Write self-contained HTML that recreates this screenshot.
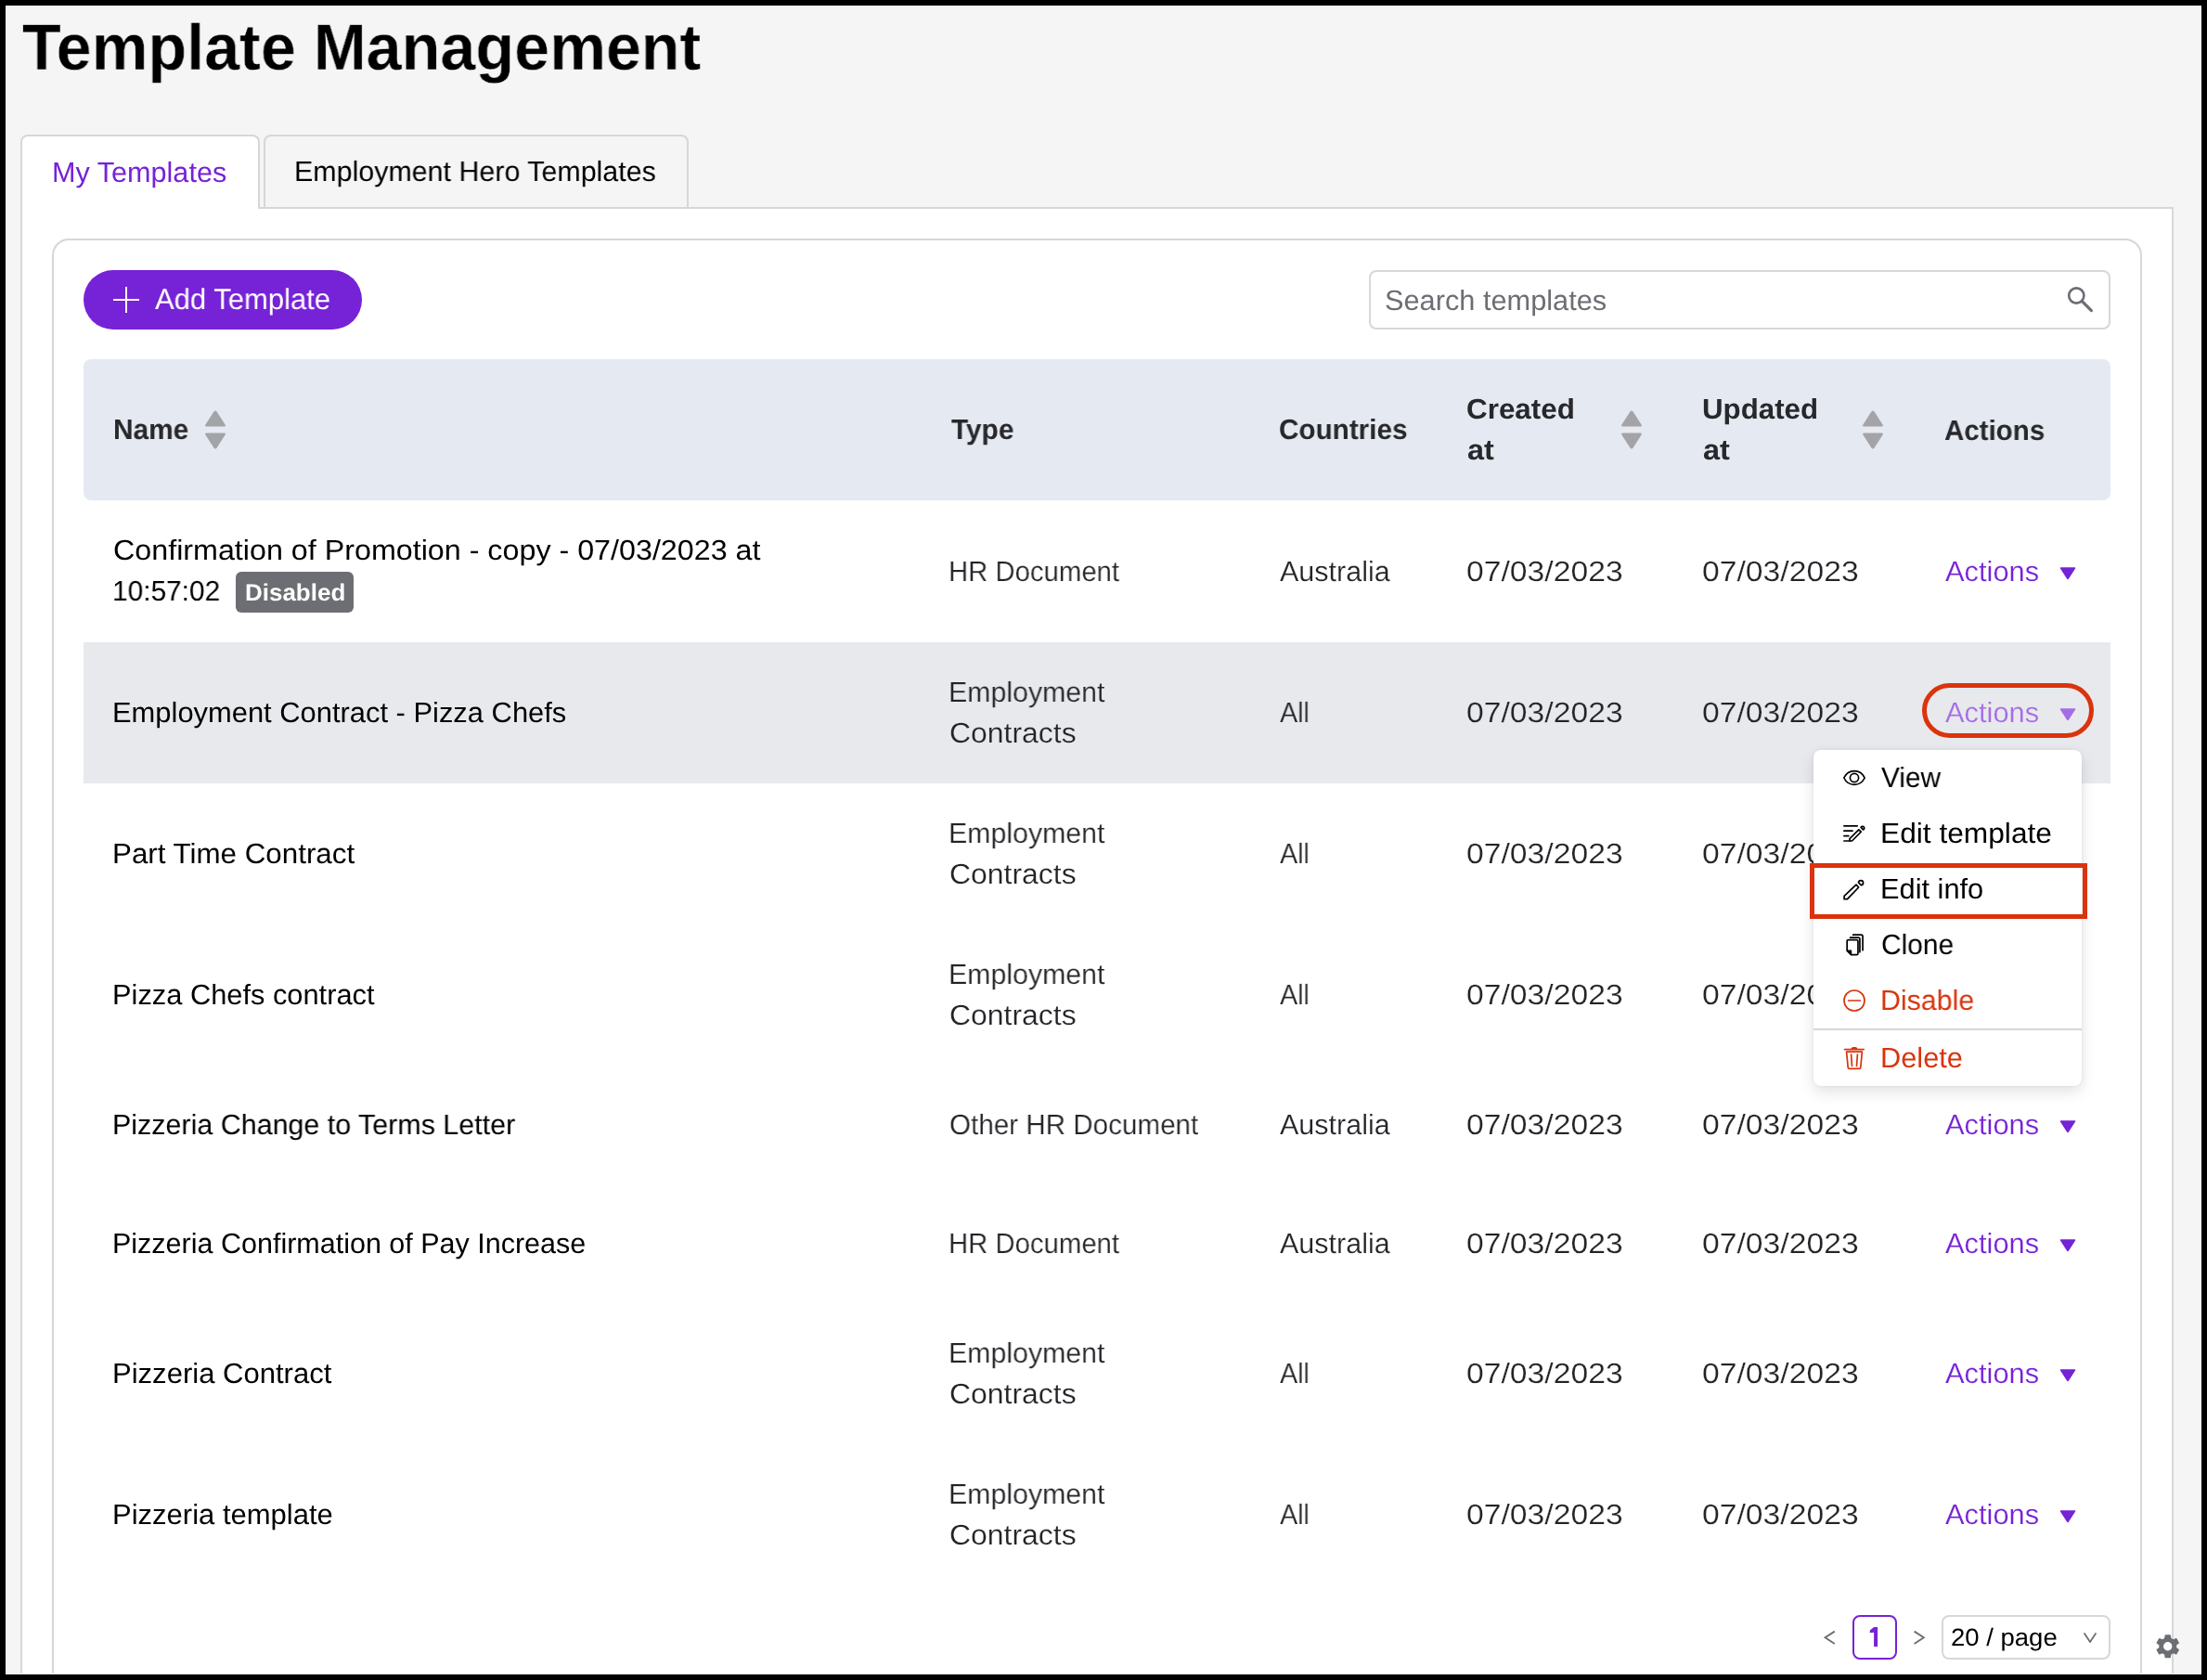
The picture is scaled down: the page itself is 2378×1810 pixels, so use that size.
<!DOCTYPE html>
<html><head><meta charset="utf-8"><title>Template Management</title>
<style>
html,body{margin:0;padding:0;}
body{width:2378px;height:1810px;overflow:hidden;background:#000;font-family:"Liberation Sans",sans-serif;}
#root{position:relative;width:2378px;height:1810px;overflow:hidden;background:#000;}
.b{position:absolute;display:block;}
.t{position:absolute;white-space:pre;transform-origin:0 0;will-change:transform;text-rendering:geometricPrecision;font-family:"Liberation Sans",sans-serif;}
</style></head><body><div id="root">
<div class="b" style="left:6px;top:6px;width:2366px;height:1798px;background:#f5f5f5"></div>
<div class="b" style="left:22px;top:223px;width:2320px;height:1677px;background:#fff;border:2px solid #d6d7db;box-sizing:border-box"></div>
<div class="b" style="left:22px;top:145px;width:258px;height:80px;background:#fff;border:2px solid #d6d7db;border-bottom:none;border-radius:8px 8px 0 0;box-sizing:border-box"></div>
<div class="b" style="left:284px;top:145px;width:458px;height:80px;background:#f5f5f5;border:2px solid #d6d7db;border-bottom:none;border-radius:8px 8px 0 0;box-sizing:border-box"></div>
<div class="b" style="left:284px;top:223px;width:458px;height:2px;background:#d6d7db"></div>
<div class="b" style="left:56px;top:257px;width:2252px;height:1643px;background:#fff;border:2px solid #d6d7db;border-radius:18px;box-sizing:border-box"></div>
<div class="b" style="left:90px;top:291px;width:300px;height:64px;background:#7622d7;border-radius:32px"></div>
<div class="b" style="left:122px;top:322px;width:28px;height:2px;background:#fff"></div>
<div class="b" style="left:135px;top:309px;width:2px;height:28px;background:#fff"></div>
<div class="b" style="left:1475px;top:291px;width:799px;height:64px;background:#fff;border:2px solid #d6d7db;border-radius:8px;box-sizing:border-box"></div>
<svg class="b" style="left:2224px;top:305px" width="36" height="36" viewBox="0 0 36 36"><circle cx="13.3" cy="13.5" r="8.1" fill="none" stroke="#6d6e73" stroke-width="2.6"/><line x1="19.2" y1="19.4" x2="29.4" y2="29.6" stroke="#6d6e73" stroke-width="3.2" stroke-linecap="round"/></svg>
<div class="b" style="left:90px;top:387px;width:2184px;height:152px;background:#e5e9f1;border-radius:8px"></div>
<svg class="b" style="left:219px;top:440px" width="26" height="46" viewBox="0 0 26 46"><path d="M13 2.5 Q13.9 2.5 14.6 3.6 L23.6 17.6 Q24.6 19.5 22.6 19.5 L3.4 19.5 Q1.4 19.5 2.4 17.6 L11.4 3.6 Q12.1 2.5 13 2.5Z" fill="#a3a4a8"/><path d="M13 43.5 Q13.9 43.5 14.6 42.4 L23.6 28.4 Q24.6 26.5 22.6 26.5 L3.4 26.5 Q1.4 26.5 2.4 28.4 L11.4 42.4 Q12.1 43.5 13 43.5Z" fill="#a3a4a8"/></svg>
<svg class="b" style="left:1744.5px;top:440px" width="26" height="46" viewBox="0 0 26 46"><path d="M13 2.5 Q13.9 2.5 14.6 3.6 L23.6 17.6 Q24.6 19.5 22.6 19.5 L3.4 19.5 Q1.4 19.5 2.4 17.6 L11.4 3.6 Q12.1 2.5 13 2.5Z" fill="#a3a4a8"/><path d="M13 43.5 Q13.9 43.5 14.6 42.4 L23.6 28.4 Q24.6 26.5 22.6 26.5 L3.4 26.5 Q1.4 26.5 2.4 28.4 L11.4 42.4 Q12.1 43.5 13 43.5Z" fill="#a3a4a8"/></svg>
<svg class="b" style="left:2005px;top:440px" width="26" height="46" viewBox="0 0 26 46"><path d="M13 2.5 Q13.9 2.5 14.6 3.6 L23.6 17.6 Q24.6 19.5 22.6 19.5 L3.4 19.5 Q1.4 19.5 2.4 17.6 L11.4 3.6 Q12.1 2.5 13 2.5Z" fill="#a3a4a8"/><path d="M13 43.5 Q13.9 43.5 14.6 42.4 L23.6 28.4 Q24.6 26.5 22.6 26.5 L3.4 26.5 Q1.4 26.5 2.4 28.4 L11.4 42.4 Q12.1 43.5 13 43.5Z" fill="#a3a4a8"/></svg>
<div class="b" style="left:90px;top:692px;width:2184px;height:152px;background:#e8e9ec"></div>
<div class="b" style="left:254px;top:616px;width:127px;height:44px;background:#6d6e73;border-radius:6px"></div>
<svg class="b" style="left:2218px;top:609.5px" width="20" height="16" viewBox="0 0 20 16"><path d="M2.6 1.2 L17.4 1.2 Q18.8 1.2 18.1 2.5 L11 13.6 Q10 14.9 9 13.6 L1.9 2.5 Q1.2 1.2 2.6 1.2Z" fill="#7622d7"/></svg>
<svg class="b" style="left:2218px;top:762.0px" width="20" height="16" viewBox="0 0 20 16"><path d="M2.6 1.2 L17.4 1.2 Q18.8 1.2 18.1 2.5 L11 13.6 Q10 14.9 9 13.6 L1.9 2.5 Q1.2 1.2 2.6 1.2Z" fill="#a56ce8"/></svg>
<svg class="b" style="left:2218px;top:914.0px" width="20" height="16" viewBox="0 0 20 16"><path d="M2.6 1.2 L17.4 1.2 Q18.8 1.2 18.1 2.5 L11 13.6 Q10 14.9 9 13.6 L1.9 2.5 Q1.2 1.2 2.6 1.2Z" fill="#7622d7"/></svg>
<svg class="b" style="left:2218px;top:1066.0px" width="20" height="16" viewBox="0 0 20 16"><path d="M2.6 1.2 L17.4 1.2 Q18.8 1.2 18.1 2.5 L11 13.6 Q10 14.9 9 13.6 L1.9 2.5 Q1.2 1.2 2.6 1.2Z" fill="#7622d7"/></svg>
<svg class="b" style="left:2218px;top:1206.0px" width="20" height="16" viewBox="0 0 20 16"><path d="M2.6 1.2 L17.4 1.2 Q18.8 1.2 18.1 2.5 L11 13.6 Q10 14.9 9 13.6 L1.9 2.5 Q1.2 1.2 2.6 1.2Z" fill="#7622d7"/></svg>
<svg class="b" style="left:2218px;top:1334.0px" width="20" height="16" viewBox="0 0 20 16"><path d="M2.6 1.2 L17.4 1.2 Q18.8 1.2 18.1 2.5 L11 13.6 Q10 14.9 9 13.6 L1.9 2.5 Q1.2 1.2 2.6 1.2Z" fill="#7622d7"/></svg>
<svg class="b" style="left:2218px;top:1474.0px" width="20" height="16" viewBox="0 0 20 16"><path d="M2.6 1.2 L17.4 1.2 Q18.8 1.2 18.1 2.5 L11 13.6 Q10 14.9 9 13.6 L1.9 2.5 Q1.2 1.2 2.6 1.2Z" fill="#7622d7"/></svg>
<svg class="b" style="left:2218px;top:1626.0px" width="20" height="16" viewBox="0 0 20 16"><path d="M2.6 1.2 L17.4 1.2 Q18.8 1.2 18.1 2.5 L11 13.6 Q10 14.9 9 13.6 L1.9 2.5 Q1.2 1.2 2.6 1.2Z" fill="#7622d7"/></svg>
<div class="b" style="left:2071px;top:736px;width:185px;height:59px;border:5px solid #db330d;border-radius:30px;box-sizing:border-box"></div>
<span class="t" style="left:24.00px;top:16.00px;font-size:70px;line-height:70px;font-weight:bold;-webkit-text-stroke:0.4px #f5f5f5;color:#000;transform:scaleX(0.9758);">Template Management</span>
<span class="t" style="left:55.79px;top:171.00px;font-size:30.5px;line-height:30.5px;color:#7622d7;transform:scaleX(1.0033);">My Templates</span>
<span class="t" style="left:316.71px;top:170.00px;font-size:30.5px;line-height:30.5px;color:#000;transform:scaleX(0.9969);">Employment Hero Templates</span>
<span class="t" style="left:167.40px;top:307.00px;font-size:31.5px;line-height:31.5px;color:#fff;transform:scaleX(0.9844);">Add Template</span>
<span class="t" style="left:1492.29px;top:309.00px;font-size:30.5px;line-height:30.5px;color:#6d6e73;transform:scaleX(1.0077);">Search templates</span>
<span class="t" style="left:121.84px;top:448.00px;font-size:30.5px;line-height:30.5px;font-weight:bold;color:#27282b;transform:scaleX(0.9787);">Name</span>
<span class="t" style="left:1024.50px;top:448.00px;font-size:30.5px;line-height:30.5px;font-weight:bold;color:#27282b;transform:scaleX(0.9785);">Type</span>
<span class="t" style="left:1377.73px;top:448.00px;font-size:30.5px;line-height:30.5px;font-weight:bold;color:#27282b;transform:scaleX(0.9724);">Countries</span>
<span class="t" style="left:1579.77px;top:426.00px;font-size:30.5px;line-height:30.5px;font-weight:bold;color:#27282b;transform:scaleX(1.0294);">Created</span>
<span class="t" style="left:1580.80px;top:470.00px;font-size:30.5px;line-height:30.5px;font-weight:bold;color:#27282b;transform:scaleX(1.0644);">at</span>
<span class="t" style="left:1833.57px;top:426.00px;font-size:30.5px;line-height:30.5px;font-weight:bold;color:#27282b;transform:scaleX(1.0254);">Updated</span>
<span class="t" style="left:1834.60px;top:470.00px;font-size:30.5px;line-height:30.5px;font-weight:bold;color:#27282b;transform:scaleX(1.0644);">at</span>
<span class="t" style="left:2095.20px;top:449.00px;font-size:30.5px;line-height:30.5px;font-weight:bold;color:#27282b;transform:scaleX(0.9668);">Actions</span>
<span class="t" style="left:121.94px;top:578.00px;font-size:30.5px;line-height:30.5px;color:#000;transform:scaleX(1.0576);">Confirmation of Promotion - copy - 07/03/2023 at</span>
<span class="t" style="left:121.04px;top:622.00px;font-size:30.5px;line-height:30.5px;color:#000;transform:scaleX(0.9787);">10:57:02</span>
<span class="t" style="left:1022.28px;top:601.00px;font-size:30.5px;line-height:30.5px;-webkit-text-stroke:0.2px #fff;color:#232427;transform:scaleX(0.9608);">HR Document</span>
<span class="t" style="left:1379.00px;top:601.00px;font-size:30.5px;line-height:30.5px;-webkit-text-stroke:0.2px #fff;color:#232427;transform:scaleX(1.0008);">Australia</span>
<span class="t" style="left:1579.80px;top:601.00px;font-size:30.5px;line-height:30.5px;-webkit-text-stroke:0.2px #fff;color:#232427;transform:scaleX(1.1049);">07/03/2023</span>
<span class="t" style="left:1833.80px;top:601.00px;font-size:30.5px;line-height:30.5px;-webkit-text-stroke:0.2px #fff;color:#232427;transform:scaleX(1.1049);">07/03/2023</span>
<span class="t" style="left:2095.60px;top:601.00px;font-size:30.5px;line-height:30.5px;-webkit-text-stroke:0.2px #fff;color:#7622d7;transform:scaleX(1.0113);">Actions</span>
<span class="t" style="left:120.97px;top:753.00px;font-size:30.5px;line-height:30.5px;color:#000;transform:scaleX(1.0128);">Employment Contract - Pizza Chefs</span>
<span class="t" style="left:1022.21px;top:731.00px;font-size:30.5px;line-height:30.5px;-webkit-text-stroke:0.2px #e8e9ec;color:#232427;transform:scaleX(0.9938);">Employment</span>
<span class="t" style="left:1023.15px;top:775.00px;font-size:30.5px;line-height:30.5px;-webkit-text-stroke:0.2px #e8e9ec;color:#232427;transform:scaleX(1.0467);">Contracts</span>
<span class="t" style="left:1379.00px;top:753.00px;font-size:30.5px;line-height:30.5px;-webkit-text-stroke:0.2px #e8e9ec;color:#232427;transform:scaleX(0.9434);">All</span>
<span class="t" style="left:1579.80px;top:753.00px;font-size:30.5px;line-height:30.5px;-webkit-text-stroke:0.2px #e8e9ec;color:#232427;transform:scaleX(1.1049);">07/03/2023</span>
<span class="t" style="left:1833.80px;top:753.00px;font-size:30.5px;line-height:30.5px;-webkit-text-stroke:0.2px #e8e9ec;color:#232427;transform:scaleX(1.1049);">07/03/2023</span>
<span class="t" style="left:2095.60px;top:753.00px;font-size:30.5px;line-height:30.5px;-webkit-text-stroke:0.2px #e8e9ec;color:#a56ce8;transform:scaleX(1.0113);">Actions</span>
<span class="t" style="left:120.95px;top:905.00px;font-size:30.5px;line-height:30.5px;color:#000;transform:scaleX(1.0271);">Part Time Contract</span>
<span class="t" style="left:1022.21px;top:883.00px;font-size:30.5px;line-height:30.5px;-webkit-text-stroke:0.2px #fff;color:#232427;transform:scaleX(0.9938);">Employment</span>
<span class="t" style="left:1023.15px;top:927.00px;font-size:30.5px;line-height:30.5px;-webkit-text-stroke:0.2px #fff;color:#232427;transform:scaleX(1.0467);">Contracts</span>
<span class="t" style="left:1379.00px;top:905.00px;font-size:30.5px;line-height:30.5px;-webkit-text-stroke:0.2px #fff;color:#232427;transform:scaleX(0.9434);">All</span>
<span class="t" style="left:1579.80px;top:905.00px;font-size:30.5px;line-height:30.5px;-webkit-text-stroke:0.2px #fff;color:#232427;transform:scaleX(1.1049);">07/03/2023</span>
<span class="t" style="left:1833.80px;top:905.00px;font-size:30.5px;line-height:30.5px;-webkit-text-stroke:0.2px #fff;color:#232427;transform:scaleX(1.1049);">07/03/2023</span>
<span class="t" style="left:2095.60px;top:905.00px;font-size:30.5px;line-height:30.5px;-webkit-text-stroke:0.2px #fff;color:#7622d7;transform:scaleX(1.0113);">Actions</span>
<span class="t" style="left:120.98px;top:1057.00px;font-size:30.5px;line-height:30.5px;color:#000;transform:scaleX(1.0100);">Pizza Chefs contract</span>
<span class="t" style="left:1022.21px;top:1035.00px;font-size:30.5px;line-height:30.5px;-webkit-text-stroke:0.2px #fff;color:#232427;transform:scaleX(0.9938);">Employment</span>
<span class="t" style="left:1023.15px;top:1079.00px;font-size:30.5px;line-height:30.5px;-webkit-text-stroke:0.2px #fff;color:#232427;transform:scaleX(1.0467);">Contracts</span>
<span class="t" style="left:1379.00px;top:1057.00px;font-size:30.5px;line-height:30.5px;-webkit-text-stroke:0.2px #fff;color:#232427;transform:scaleX(0.9434);">All</span>
<span class="t" style="left:1579.80px;top:1057.00px;font-size:30.5px;line-height:30.5px;-webkit-text-stroke:0.2px #fff;color:#232427;transform:scaleX(1.1049);">07/03/2023</span>
<span class="t" style="left:1833.80px;top:1057.00px;font-size:30.5px;line-height:30.5px;-webkit-text-stroke:0.2px #fff;color:#232427;transform:scaleX(1.1049);">07/03/2023</span>
<span class="t" style="left:2095.60px;top:1057.00px;font-size:30.5px;line-height:30.5px;-webkit-text-stroke:0.2px #fff;color:#7622d7;transform:scaleX(1.0113);">Actions</span>
<span class="t" style="left:121.00px;top:1197.00px;font-size:30.5px;line-height:30.5px;color:#000;transform:scaleX(0.9979);">Pizzeria Change to Terms Letter</span>
<span class="t" style="left:1023.23px;top:1197.00px;font-size:30.5px;line-height:30.5px;-webkit-text-stroke:0.2px #fff;color:#232427;transform:scaleX(0.9709);">Other HR Document</span>
<span class="t" style="left:1379.00px;top:1197.00px;font-size:30.5px;line-height:30.5px;-webkit-text-stroke:0.2px #fff;color:#232427;transform:scaleX(1.0008);">Australia</span>
<span class="t" style="left:1579.80px;top:1197.00px;font-size:30.5px;line-height:30.5px;-webkit-text-stroke:0.2px #fff;color:#232427;transform:scaleX(1.1049);">07/03/2023</span>
<span class="t" style="left:1833.80px;top:1197.00px;font-size:30.5px;line-height:30.5px;-webkit-text-stroke:0.2px #fff;color:#232427;transform:scaleX(1.1049);">07/03/2023</span>
<span class="t" style="left:2095.60px;top:1197.00px;font-size:30.5px;line-height:30.5px;-webkit-text-stroke:0.2px #fff;color:#7622d7;transform:scaleX(1.0113);">Actions</span>
<span class="t" style="left:121.00px;top:1325.00px;font-size:30.5px;line-height:30.5px;color:#000;transform:scaleX(1.0000);">Pizzeria Confirmation of Pay Increase</span>
<span class="t" style="left:1022.28px;top:1325.00px;font-size:30.5px;line-height:30.5px;-webkit-text-stroke:0.2px #fff;color:#232427;transform:scaleX(0.9608);">HR Document</span>
<span class="t" style="left:1379.00px;top:1325.00px;font-size:30.5px;line-height:30.5px;-webkit-text-stroke:0.2px #fff;color:#232427;transform:scaleX(1.0008);">Australia</span>
<span class="t" style="left:1579.80px;top:1325.00px;font-size:30.5px;line-height:30.5px;-webkit-text-stroke:0.2px #fff;color:#232427;transform:scaleX(1.1049);">07/03/2023</span>
<span class="t" style="left:1833.80px;top:1325.00px;font-size:30.5px;line-height:30.5px;-webkit-text-stroke:0.2px #fff;color:#232427;transform:scaleX(1.1049);">07/03/2023</span>
<span class="t" style="left:2095.60px;top:1325.00px;font-size:30.5px;line-height:30.5px;-webkit-text-stroke:0.2px #fff;color:#7622d7;transform:scaleX(1.0113);">Actions</span>
<span class="t" style="left:120.96px;top:1465.00px;font-size:30.5px;line-height:30.5px;color:#000;transform:scaleX(1.0176);">Pizzeria Contract</span>
<span class="t" style="left:1022.21px;top:1443.00px;font-size:30.5px;line-height:30.5px;-webkit-text-stroke:0.2px #fff;color:#232427;transform:scaleX(0.9938);">Employment</span>
<span class="t" style="left:1023.15px;top:1487.00px;font-size:30.5px;line-height:30.5px;-webkit-text-stroke:0.2px #fff;color:#232427;transform:scaleX(1.0467);">Contracts</span>
<span class="t" style="left:1379.00px;top:1465.00px;font-size:30.5px;line-height:30.5px;-webkit-text-stroke:0.2px #fff;color:#232427;transform:scaleX(0.9434);">All</span>
<span class="t" style="left:1579.80px;top:1465.00px;font-size:30.5px;line-height:30.5px;-webkit-text-stroke:0.2px #fff;color:#232427;transform:scaleX(1.1049);">07/03/2023</span>
<span class="t" style="left:1833.80px;top:1465.00px;font-size:30.5px;line-height:30.5px;-webkit-text-stroke:0.2px #fff;color:#232427;transform:scaleX(1.1049);">07/03/2023</span>
<span class="t" style="left:2095.60px;top:1465.00px;font-size:30.5px;line-height:30.5px;-webkit-text-stroke:0.2px #fff;color:#7622d7;transform:scaleX(1.0113);">Actions</span>
<span class="t" style="left:120.97px;top:1617.00px;font-size:30.5px;line-height:30.5px;color:#000;transform:scaleX(1.0166);">Pizzeria template</span>
<span class="t" style="left:1022.21px;top:1595.00px;font-size:30.5px;line-height:30.5px;-webkit-text-stroke:0.2px #fff;color:#232427;transform:scaleX(0.9938);">Employment</span>
<span class="t" style="left:1023.15px;top:1639.00px;font-size:30.5px;line-height:30.5px;-webkit-text-stroke:0.2px #fff;color:#232427;transform:scaleX(1.0467);">Contracts</span>
<span class="t" style="left:1379.00px;top:1617.00px;font-size:30.5px;line-height:30.5px;-webkit-text-stroke:0.2px #fff;color:#232427;transform:scaleX(0.9434);">All</span>
<span class="t" style="left:1579.80px;top:1617.00px;font-size:30.5px;line-height:30.5px;-webkit-text-stroke:0.2px #fff;color:#232427;transform:scaleX(1.1049);">07/03/2023</span>
<span class="t" style="left:1833.80px;top:1617.00px;font-size:30.5px;line-height:30.5px;-webkit-text-stroke:0.2px #fff;color:#232427;transform:scaleX(1.1049);">07/03/2023</span>
<span class="t" style="left:2095.60px;top:1617.00px;font-size:30.5px;line-height:30.5px;-webkit-text-stroke:0.2px #fff;color:#7622d7;transform:scaleX(1.0113);">Actions</span>
<span class="t" style="left:263.99px;top:627.00px;font-size:25.6px;line-height:25.6px;font-weight:bold;color:#fff;transform:scaleX(1.0150);">Disabled</span>
<div class="b" style="left:1954px;top:808px;width:289px;height:362px;background:#fff;border-radius:8px;box-shadow:0 6px 16px rgba(0,0,0,0.12), 0 0 4px rgba(0,0,0,0.07)"></div>
<div class="b" style="left:1954px;top:1108px;width:289px;height:2px;background:#d6d7db"></div>
<div class="b" style="left:1950px;top:930px;width:299px;height:60px;border:5px solid #db330d;box-sizing:border-box"></div>
<svg class="b" style="left:1984px;top:826px" width="28" height="24" viewBox="0 0 28 24"><path d="M2.8 12 C7.5 2.2, 20.5 2.2, 25.2 12 C20.5 21.8, 7.5 21.8, 2.8 12 Z" fill="none" stroke="#000" stroke-width="1.7" stroke-linecap="round" stroke-linejoin="round"/><circle cx="14" cy="12" r="4.6" fill="none" stroke="#000" stroke-width="1.7" stroke-linecap="round" stroke-linejoin="round"/></svg>
<svg class="b" style="left:1984px;top:886px" width="28" height="24" viewBox="0 0 28 24"><path d="M2.9 3.8 H17.2 M2.9 9.2 H12 M2.9 14.6 H7.9 M2.9 20 H9" fill="none" stroke="#000" stroke-width="1.7" stroke-linecap="round" stroke-linejoin="round" stroke-width="1.8"/><path d="M9 20 L9 17.7 L18.8 7.9 L21.3 10.2 L11.5 20 Z" fill="none" stroke="#000" stroke-width="1.7" stroke-linecap="round" stroke-linejoin="round" stroke-width="1.8"/><path d="M21.1 5.4 L23.6 7.9 A1.9 1.9 0 1 0 21.1 5.4 Z" fill="none" stroke="#000" stroke-width="1.7" stroke-linecap="round" stroke-linejoin="round" stroke-width="1.8"/></svg>
<svg class="b" style="left:1984px;top:945px" width="28" height="28" viewBox="0 0 28 28"><path d="M3.1 23.7 L3.1 20.3 L16 8.1 L18.7 11 L6.5 23.7 Z" fill="none" stroke="#000" stroke-width="1.7" stroke-linecap="round" stroke-linejoin="round"/><path d="M18.5 5.9 L21.3 8.7 A2.55 2.55 0 1 0 18.5 5.9 Z" fill="none" stroke="#000" stroke-width="1.7" stroke-linecap="round" stroke-linejoin="round"/></svg>
<svg class="b" style="left:1986px;top:1004px" width="26" height="28" viewBox="0 0 26 28"><path d="M4.15 9.9 Q4.15 8.55 5.5 8.55 L14.6 8.55 Q15.95 8.55 15.95 9.9 L15.95 23.3 Q15.95 24.65 14.6 24.65 L8.6 24.65 L4.15 20.2 Z" fill="none" stroke="#000" stroke-width="1.7" stroke-linecap="round" stroke-linejoin="round" stroke-width="1.9"/><path d="M4.15 20.2 L8.6 20.2 L8.6 24.65 Z" fill="#000" stroke="#000" stroke-width="1.2" stroke-linejoin="round"/><path d="M7.6 6.15 L16.3 6.15 Q17.95 6.15 17.95 7.8 L17.95 21.7" fill="none" stroke="#000" stroke-width="1.7" stroke-linecap="round" stroke-linejoin="round" stroke-width="1.9"/><path d="M10.6 3.15 L19.4 3.15 Q21.05 3.15 21.05 4.8 L21.05 19.7" fill="none" stroke="#000" stroke-width="1.7" stroke-linecap="round" stroke-linejoin="round" stroke-width="1.9"/></svg>
<svg class="b" style="left:1984px;top:1064px" width="28" height="28" viewBox="0 0 28 28"><circle cx="14" cy="14" r="11" fill="none" stroke="#d9340c" stroke-width="1.7" stroke-linecap="round" stroke-linejoin="round"/><path d="M7.6 14 H20.4" fill="none" stroke="#d9340c" stroke-width="1.7" stroke-linecap="round" stroke-linejoin="round" stroke-width="2"/></svg>
<svg class="b" style="left:1984px;top:1125px" width="28" height="30" viewBox="0 0 28 30"><path d="M3.6 5.6 H24.2" fill="none" stroke="#d9340c" stroke-width="1.7" stroke-linecap="round" stroke-linejoin="round" stroke-width="2"/><path d="M10.4 5 Q11 3 13 3 L15 3 Q17 3 17.6 5Z" fill="#d9340c"/><path d="M5.6 8.2 L22.4 8.2 L20.8 25.2 Q20.6 26.4 19.4 26.4 L8.6 26.4 Q7.4 26.4 7.2 25.2 Z" fill="none" stroke="#d9340c" stroke-width="1.7" stroke-linecap="round" stroke-linejoin="round"/><path d="M10.6 11.2 L11.5 23.4 M17.4 11.2 L16.5 23.4" fill="none" stroke="#d9340c" stroke-width="1.7" stroke-linecap="round" stroke-linejoin="round"/></svg>
<span class="t" style="left:2027.10px;top:823.00px;font-size:30.5px;line-height:30.5px;color:#000;transform:scaleX(0.9770);">View</span>
<span class="t" style="left:2025.72px;top:883.00px;font-size:30.5px;line-height:30.5px;color:#000;transform:scaleX(1.0391);">Edit template</span>
<span class="t" style="left:2025.78px;top:943.00px;font-size:30.5px;line-height:30.5px;color:#000;transform:scaleX(1.0089);">Edit info</span>
<span class="t" style="left:2026.82px;top:1003.00px;font-size:30.5px;line-height:30.5px;color:#000;transform:scaleX(0.9803);">Clone</span>
<span class="t" style="left:2025.81px;top:1063.00px;font-size:30.5px;line-height:30.5px;color:#d9340c;transform:scaleX(0.9944);">Disable</span>
<span class="t" style="left:2025.78px;top:1125.00px;font-size:30.5px;line-height:30.5px;color:#d9340c;transform:scaleX(1.0082);">Delete</span>
<span class="t" style="left:2101.86px;top:1751.00px;font-size:26.5px;line-height:26.5px;color:#000;transform:scaleX(1.0379);">20 / page</span>
<svg class="b" style="left:1962px;top:1754px" width="20" height="22" viewBox="0 0 20 22"><path d="M14.8 3.6 L4.6 10.3 L14.8 17" fill="none" stroke="#6d6e73" stroke-width="1.9" stroke-linecap="butt" stroke-linejoin="miter"/></svg>
<svg class="b" style="left:2058px;top:1754px" width="20" height="22" viewBox="0 0 20 22"><path d="M4.6 3.6 L14.8 10.3 L4.6 17" fill="none" stroke="#6d6e73" stroke-width="1.9" stroke-linecap="butt" stroke-linejoin="miter"/></svg>
<div class="b" style="left:1996px;top:1740px;width:48px;height:48px;border:2px solid #7622d7;border-radius:8px;box-sizing:border-box"></div>
<svg class="b" style="left:2010px;top:1750px" width="20" height="28" viewBox="0 0 20 28"><path d="M9.1 3 L13.1 3 L13.1 24 L9.1 24 L9.1 8.7 L4.8 9.3 L4.8 6.5 Z" fill="#7622d7"/></svg>
<div class="b" style="left:2092px;top:1740px;width:182px;height:48px;border:2px solid #d6d7db;border-radius:8px;box-sizing:border-box"></div>
<svg class="b" style="left:2242px;top:1756px" width="20" height="16" viewBox="0 0 20 16"><path d="M4 4 L10 13 L16 4" fill="none" stroke="#6d6e73" stroke-width="1.8" stroke-linecap="round" stroke-linejoin="round"/></svg>
<svg class="b" style="left:2320px;top:1758.3px" width="31.5" height="31.5" viewBox="0 0 24 24"><path fill="#6d6e73" d="M19.14 12.94c.04-.3.06-.61.06-.94 0-.32-.02-.64-.07-.94l2.03-1.58a.49.49 0 0 0 .12-.61l-1.92-3.32a.49.49 0 0 0-.59-.22l-2.39.96c-.5-.38-1.03-.7-1.62-.94l-.36-2.54a.48.48 0 0 0-.48-.41h-3.84c-.24 0-.43.17-.47.41l-.36 2.54c-.59.24-1.13.57-1.62.94l-2.39-.96a.48.48 0 0 0-.59.22L2.74 8.87c-.12.21-.08.47.12.61l2.03 1.58c-.05.3-.09.63-.09.94s.02.64.07.94l-2.03 1.58a.49.49 0 0 0-.12.61l1.92 3.32c.12.22.37.29.59.22l2.39-.96c.5.38 1.03.7 1.62.94l.36 2.54c.05.24.24.41.48.41h3.84c.24 0 .44-.17.47-.41l.36-2.54c.59-.24 1.13-.56 1.62-.94l2.39.96c.22.08.47 0 .59-.22l1.92-3.32c.12-.22.07-.47-.12-.61l-2.01-1.58zM12 15.6A3.6 3.6 0 1 1 12 8.4a3.6 3.6 0 0 1 0 7.2z"/></svg>
<div class="b" style="left:6px;top:6px;width:2366px;height:1px;background:#fff;z-index:49"></div>
<div class="b" style="left:6px;top:1803px;width:2366px;height:1px;background:#fff;z-index:49"></div>
<div class="b" style="left:6px;top:6px;width:1px;height:1798px;background:#fff;z-index:49"></div>
<div class="b" style="left:2371px;top:6px;width:1px;height:1798px;background:#fff;z-index:49"></div>
<div class="b" style="left:0px;top:0px;width:2378px;height:6px;background:#000;z-index:50"></div>
<div class="b" style="left:0px;top:1804px;width:2378px;height:6px;background:#000;z-index:50"></div>
<div class="b" style="left:0px;top:0px;width:6px;height:1810px;background:#000;z-index:50"></div>
<div class="b" style="left:2372px;top:0px;width:6px;height:1810px;background:#000;z-index:50"></div>
</div></body></html>
